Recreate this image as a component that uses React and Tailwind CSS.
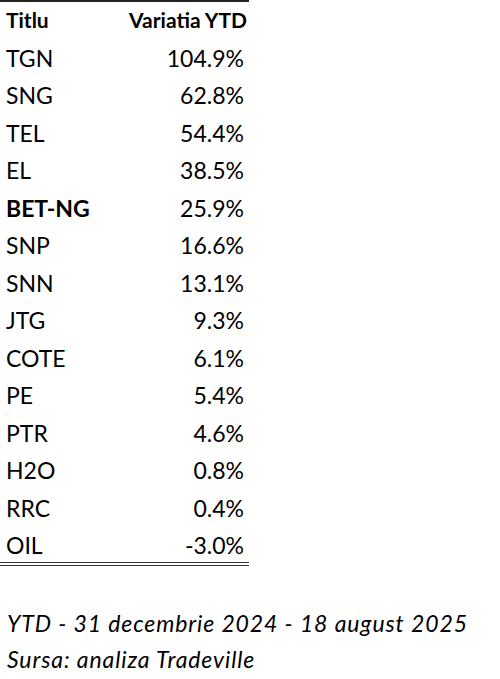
const rows = [
  ["TGN", "104.9%"],
  ["SNG", "62.8%"],
  ["TEL", "54.4%"],
  ["EL", "38.5%"],
  ["BET-NG", "25.9%", true],
  ["SNP", "16.6%"],
  ["SNN", "13.1%"],
  ["JTG", "9.3%"],
  ["COTE", "6.1%"],
  ["PE", "5.4%"],
  ["PTR", "4.6%"],
  ["H2O", "0.8%"],
  ["RRC", "0.4%"],
  ["OIL", "-3.0%"],
];

export default function App() {
  return (
    <div className="w-[500px] h-[679px] bg-white text-black font-['Lato','Liberation_Sans',sans-serif]">
      <div className="w-[249px] border-t-2 border-[#222]">
        <div className="flex items-end justify-between h-[38px] pl-[6px] pr-[2px] text-[21px] font-bold leading-none pb-[10px]">
          <span>Titlu</span>
          <span>Variatia YTD</span>
        </div>
        <div className="border-b-[4px] border-double border-[#333]">
          {rows.map(([name, val, bold], i) => (
            <div
              key={name}
              className={
                "flex items-end justify-between pl-[6px] pr-[5px] text-[23px] leading-none " +
                (i === rows.length - 1 ? "h-[34px] pb-[4.5px]" : "h-[37.5px] pb-[8px]")
              }
            >
              <span className={bold ? "font-bold" : ""}>{name}</span>
              <span>{val}</span>
            </div>
          ))}
        </div>
      </div>
      <div className="pl-[7px] pt-[39.5px] italic text-[23px] leading-[36px] tracking-[0.9px]">
        <p>YTD - 31 decembrie 2024 - 18 august 2025</p>
        <p>Sursa: analiza Tradeville</p>
      </div>
    </div>
  );
}
